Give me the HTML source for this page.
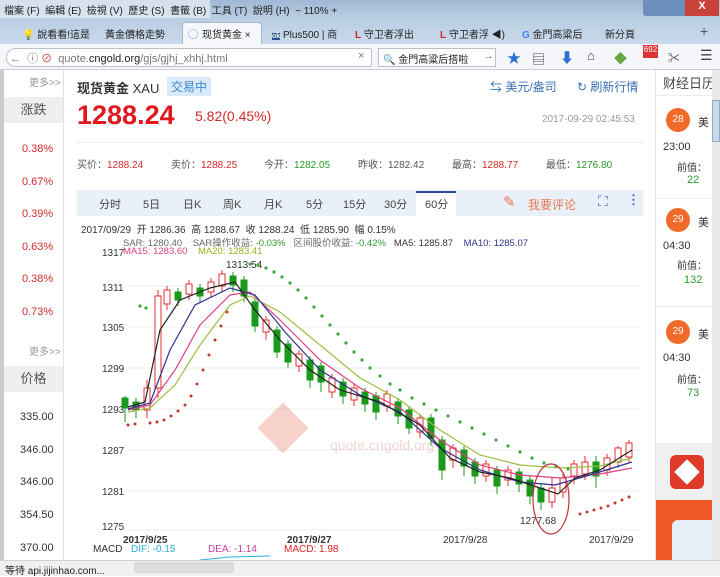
<!DOCTYPE html>
<html><head><meta charset="utf-8"><style>
*{margin:0;padding:0;box-sizing:border-box}
body{width:720px;height:576px;overflow:hidden;font-family:"Liberation Sans","Noto Sans CJK SC",sans-serif;background:#fff;position:relative;font-size:12px;color:#333}
.abs{position:absolute;white-space:nowrap}
.red{color:#d42a2a}.grn{color:#2a9a2a}
</style></head><body>
<div class="abs" style="left:0;top:0;width:720px;height:44px;background:linear-gradient(#9fb8d4,#b9cde2 40%,#c9d9ea)"></div>
<div class="abs" style="left:0;top:0;width:210px;height:18px;background:#dfe8f2;opacity:.85"></div>
<div class="abs" style="left:4px;top:2px;font-size:10px;color:#222">檔案 (F)&nbsp; 編輯 (E)&nbsp; 檢視 (V)&nbsp; 歷史 (S)&nbsp; 書籤 (B)&nbsp; 工具 (T)&nbsp; 說明 (H)&nbsp; <b style="color:#555">−</b> 110% +</div>
<div class="abs" style="left:643px;top:0;width:22px;height:16px;background:#6c8fbf;border-radius:0 0 0 3px"></div>
<div class="abs" style="left:665px;top:0;width:20px;height:16px;background:#6c8fbf"></div>
<div class="abs" style="left:685px;top:0;width:34px;height:16px;background:#c8413a;color:#fff;text-align:center;font-size:11px;font-weight:bold">X</div>
<div class="abs" style="left:0;top:20px;width:720px;height:24px;font-size:10px;color:#222">
<span class="abs" style="left:22px;top:6px">💡 說看看!這是</span>
<span class="abs" style="left:105px;top:6px">黃金價格走勢</span>
<div class="abs" style="left:182px;top:2px;width:80px;height:22px;background:#f5f7fa;border-radius:4px 4px 0 0;border:1px solid #a9b8c8;border-bottom:none"></div>
<span class="abs" style="left:188px;top:6px;color:#2a7de1">◯</span><span class="abs" style="left:202px;top:6px">现货黄金 ×</span>
<span class="abs" style="left:272px;top:6px"><b style="background:#2a4f8e;color:#fff;font-size:7px">ok</b> Plus500 | 商</span>
<span class="abs" style="left:355px;top:6px"><b style="color:#d22">L</b> 守卫者浮出</span>
<span class="abs" style="left:440px;top:6px"><b style="color:#d22">L</b> 守卫者浮 ◀)</span>
<span class="abs" style="left:522px;top:6px"><b style="color:#4285f4">G</b> 金門高粱后</span>
<span class="abs" style="left:605px;top:6px">新分頁</span>
<span class="abs" style="left:700px;top:3px;font-size:14px;color:#555">+</span>
</div>
<div class="abs" style="left:0;top:44px;width:720px;height:26px;background:#f4f6f9;border-bottom:1px solid #c9ced6"></div>
<div class="abs" style="left:6px;top:48px;width:366px;height:19px;background:#fff;border:1px solid #b9c0cb;border-radius:10px 2px 2px 10px"></div>
<div class="abs" style="left:10px;top:50px;font-size:11px;color:#777">←&nbsp; ⓘ <span style="color:#c33">⊘</span>&nbsp; quote.<span style="color:#222">cngold.org</span>/gjs/gjhj_xhhj.html</div>
<div class="abs" style="left:358px;top:50px;font-size:11px;color:#777">×</div>
<div class="abs" style="left:378px;top:48px;width:118px;height:19px;background:#fff;border:1px solid #b9c0cb"></div>
<div class="abs" style="left:383px;top:51px;font-size:10px;color:#222">🔍 金門高粱后搭啦</div>
<div class="abs" style="left:483px;top:50px;font-size:11px;color:#777">→</div>
<div class="abs" style="left:507px;top:48px;font-size:14px;color:#2a72d0">★</div>
<div class="abs" style="left:532px;top:49px;font-size:13px;color:#444">▤</div>
<div class="abs" style="left:560px;top:48px;font-size:14px;color:#2a72d0">⬇</div>
<div class="abs" style="left:587px;top:48px;font-size:13px;color:#444">⌂</div>
<div class="abs" style="left:614px;top:48px;font-size:13px;color:#6a4">◆</div>
<div class="abs" style="left:643px;top:45px;width:15px;height:13px;background:#d33;color:#fff;font-size:8px;text-align:center">692</div>
<div class="abs" style="left:668px;top:49px;font-size:12px;color:#444">✂</div>
<div class="abs" style="left:700px;top:47px;font-size:14px;color:#444">☰</div>

<div class="abs" style="left:0;top:70px;width:4px;height:490px;background:#c8ccd2"></div>
<div class="abs" style="left:63px;top:70px;width:1px;height:490px;background:#e2e2e2"></div>
<div class="abs" style="left:29px;top:74px;font-size:10px;color:#999">更多>></div>
<div class="abs" style="left:4px;top:97px;width:59px;height:26px;background:#efefef;text-align:center;line-height:26px;font-size:13px;color:#555">涨跌</div>
<div class="abs red" style="left:22px;top:133px;font-size:11px;line-height:32.5px">0.38%<br>0.67%<br>0.39%<br>0.63%<br>0.38%<br>0.73%</div>
<div class="abs" style="left:29px;top:343px;font-size:10px;color:#999">更多>></div>
<div class="abs" style="left:4px;top:366px;width:59px;height:26px;background:#efefef;text-align:center;line-height:26px;font-size:13px;color:#555">价格</div>
<div class="abs" style="left:20px;top:401px;font-size:11px;line-height:32.7px;color:#333">335.00<br>346.00<br>346.00<br>354.50<br>370.00</div>

<div class="abs" style="left:77px;top:78px;font-size:13px;color:#333"><b>现货黄金</b> XAU</div>
<div class="abs" style="left:167px;top:77px;padding:1px 4px;background:#dbeaf8;color:#3a8ad0;font-size:12px">交易中</div>
<div class="abs" style="left:490px;top:78px;font-size:12px;color:#3a70b8">⇆ 美元/盎司</div>
<div class="abs" style="left:577px;top:78px;font-size:12px;color:#3a70b8">↻ 刷新行情</div>
<div class="abs" style="left:77px;top:100px;font-size:27px;font-weight:bold;color:#e0191e">1288.24</div>
<div class="abs" style="left:195px;top:108px;font-size:14px;color:#d42a2a">5.82(0.45%)</div>
<div class="abs" style="left:542px;top:114px;font-size:10px;color:#999">2017-09-29 02:45:53</div>
<div class="abs" style="left:77px;top:142px;width:566px;height:1px;background:#ececec"></div>
<div class="abs" style="left:77px;top:156px;font-size:10px;color:#555">买价：<span class="red">1288.24</span></div>
<div class="abs" style="left:171px;top:156px;font-size:10px;color:#555">卖价：<span class="red">1288.25</span></div>
<div class="abs" style="left:264px;top:156px;font-size:10px;color:#555">今开：<span class="grn">1282.05</span></div>
<div class="abs" style="left:358px;top:156px;font-size:10px;color:#555">昨收：1282.42</div>
<div class="abs" style="left:452px;top:156px;font-size:10px;color:#555">最高：<span class="red">1288.77</span></div>
<div class="abs" style="left:546px;top:156px;font-size:10px;color:#555">最低：<span class="grn">1276.80</span></div>
<div class="abs" style="left:77px;top:190px;width:566px;height:26px;background:#e9f0f9"></div>
<div class="abs" style="left:416px;top:191px;width:40px;height:25px;background:#fff;border-top:2px solid #2a4f8e"></div>
<div class="abs" style="left:77px;top:196px;font-size:11px;color:#444">
<span class="abs" style="left:22px">分时</span><span class="abs" style="left:66px">5日</span><span class="abs" style="left:106px">日K</span><span class="abs" style="left:146px">周K</span><span class="abs" style="left:187px">月K</span><span class="abs" style="left:229px">5分</span><span class="abs" style="left:266px">15分</span><span class="abs" style="left:307px">30分</span><span class="abs" style="left:348px">60分</span></div>
<div class="abs" style="left:503px;top:193px;font-size:15px;color:#e87a50">✎</div>
<div class="abs" style="left:528px;top:196px;font-size:12px;color:#e87a50">我要评论</div>
<div class="abs" style="left:598px;top:193px;font-size:14px;color:#3a70c8">⛶</div>
<div class="abs" style="left:627px;top:192px;font-size:13px;color:#3a70c8;font-weight:bold">⋮</div>

<svg class="abs" style="left:77px;top:244px" width="566" height="316" viewBox="77 244 566 316">
<g stroke="#ececec" stroke-width="1">
<line x1="128" y1="286" x2="640" y2="286"/><line x1="128" y1="327" x2="640" y2="327"/><line x1="128" y1="368" x2="640" y2="368"/><line x1="128" y1="409" x2="640" y2="409"/><line x1="128" y1="450" x2="640" y2="450"/><line x1="128" y1="491" x2="640" y2="491"/><line x1="128" y1="530" x2="640" y2="530"/>
</g>
<g font-size="10" fill="#333" font-family="Liberation Sans">
<text x="102" y="256">1317</text><text x="102" y="291">1311</text><text x="102" y="331">1305</text><text x="102" y="372">1299</text><text x="102" y="413">1293</text><text x="102" y="454">1287</text><text x="102" y="495">1281</text><text x="102" y="530">1275</text>
<text x="123" y="543" font-weight="bold">2017/9/25</text><text x="287" y="543" font-weight="bold">2017/9/27</text><text x="443" y="543">2017/9/28</text><text x="589" y="543">2017/9/29</text>
<text x="226" y="268">1313.54</text><text x="520" y="524">1277.68</text>
<text x="93" y="552">MACD</text><text x="131" y="552" fill="#2ab0d8">DIF: -0.15</text><text x="208" y="552" fill="#c040a0">DEA: -1.14</text><text x="284" y="552" fill="#d22">MACD: 1.98</text>
</g>
<g opacity=".25"><rect x="265" y="410" width="36" height="36" fill="#e05030" transform="rotate(45 283 428)"/><text x="330" y="450" font-size="14" fill="#c55">quote.cngold.org</text></g>
<g stroke-width="1">
<g fill="#1a9a1a" stroke="#1a9a1a">
<line x1="125" y1="396" x2="125" y2="422"/><rect x="122" y="398" width="6" height="10"/>
<line x1="136" y1="398" x2="136" y2="418"/><rect x="133" y="402" width="6" height="8"/>
<line x1="178" y1="288" x2="178" y2="306"/><rect x="175" y="292" width="6" height="8"/>
<line x1="200" y1="284" x2="200" y2="302"/><rect x="197" y="288" width="6" height="8"/>
<line x1="233" y1="272" x2="233" y2="292"/><rect x="230" y="276" width="6" height="9"/>
<line x1="244" y1="276" x2="244" y2="302"/><rect x="241" y="280" width="6" height="16"/>
<line x1="255" y1="298" x2="255" y2="332"/><rect x="252" y="302" width="6" height="24"/>
<line x1="277" y1="326" x2="277" y2="358"/><rect x="274" y="330" width="6" height="22"/>
<line x1="288" y1="340" x2="288" y2="368"/><rect x="285" y="344" width="6" height="18"/>
<line x1="310" y1="356" x2="310" y2="388"/><rect x="307" y="360" width="6" height="20"/>
<line x1="321" y1="362" x2="321" y2="392"/><rect x="318" y="366" width="6" height="16"/>
<line x1="343" y1="378" x2="343" y2="404"/><rect x="340" y="382" width="6" height="14"/>
<line x1="365" y1="388" x2="365" y2="412"/><rect x="362" y="392" width="6" height="12"/>
<line x1="376" y1="392" x2="376" y2="420"/><rect x="373" y="396" width="6" height="16"/>
<line x1="398" y1="398" x2="398" y2="424"/><rect x="395" y="402" width="6" height="14"/>
<line x1="409" y1="406" x2="409" y2="434"/><rect x="406" y="410" width="6" height="18"/>
<line x1="431" y1="414" x2="431" y2="446"/><rect x="428" y="418" width="6" height="20"/>
<line x1="442" y1="436" x2="442" y2="480"/><rect x="439" y="440" width="6" height="30"/>
<line x1="464" y1="446" x2="464" y2="476"/><rect x="461" y="450" width="6" height="16"/>
<line x1="475" y1="458" x2="475" y2="484"/><rect x="472" y="462" width="6" height="14"/>
<line x1="497" y1="466" x2="497" y2="494"/><rect x="494" y="470" width="6" height="16"/>
<line x1="519" y1="468" x2="519" y2="492"/><rect x="516" y="472" width="6" height="12"/>
<line x1="530" y1="476" x2="530" y2="504"/><rect x="527" y="480" width="6" height="16"/>
<line x1="541" y1="484" x2="541" y2="510"/><rect x="538" y="488" width="6" height="14"/>
<line x1="596" y1="456" x2="596" y2="488"/><rect x="593" y="462" width="6" height="14"/>
</g>
<g fill="#fff" stroke="#e03030">
<line x1="147" y1="380" x2="147" y2="418"/><rect x="144" y="388" width="6" height="22"/>
<line x1="158" y1="290" x2="158" y2="398"/><rect x="155" y="296" width="6" height="92"/>
<line x1="167" y1="286" x2="167" y2="310"/><rect x="164" y="290" width="6" height="14"/>
<line x1="189" y1="280" x2="189" y2="300"/><rect x="186" y="284" width="6" height="10"/>
<line x1="211" y1="278" x2="211" y2="298"/><rect x="208" y="282" width="6" height="10"/>
<line x1="222" y1="270" x2="222" y2="292"/><rect x="219" y="274" width="6" height="12"/>
<line x1="266" y1="316" x2="266" y2="340"/><rect x="263" y="320" width="6" height="12"/>
<line x1="299" y1="350" x2="299" y2="372"/><rect x="296" y="354" width="6" height="12"/>
<line x1="332" y1="374" x2="332" y2="398"/><rect x="329" y="378" width="6" height="14"/>
<line x1="354" y1="384" x2="354" y2="406"/><rect x="351" y="388" width="6" height="12"/>
<line x1="387" y1="390" x2="387" y2="412"/><rect x="384" y="394" width="6" height="12"/>
<line x1="420" y1="414" x2="420" y2="438"/><rect x="417" y="418" width="6" height="14"/>
<line x1="453" y1="444" x2="453" y2="468"/><rect x="450" y="448" width="6" height="12"/>
<line x1="486" y1="460" x2="486" y2="482"/><rect x="483" y="464" width="6" height="12"/>
<line x1="508" y1="466" x2="508" y2="486"/><rect x="505" y="470" width="6" height="10"/>
<line x1="552" y1="478" x2="552" y2="508"/><rect x="549" y="488" width="6" height="14"/>
<line x1="563" y1="472" x2="563" y2="498"/><rect x="560" y="478" width="6" height="14"/>
<line x1="574" y1="460" x2="574" y2="484"/><rect x="571" y="464" width="6" height="12"/>
<line x1="585" y1="456" x2="585" y2="480"/><rect x="582" y="462" width="6" height="12"/>
<line x1="607" y1="454" x2="607" y2="476"/><rect x="604" y="458" width="6" height="12"/>
<line x1="618" y1="446" x2="618" y2="468"/><rect x="615" y="448" width="6" height="14"/>
<line x1="629" y1="440" x2="629" y2="462"/><rect x="626" y="443" width="6" height="14"/>
</g></g>
<g fill="none" stroke-width="1.2">
<polyline stroke="#9bc040" points="128,412 150,408 175,385 200,345 230,305 250,296 280,312 320,345 360,378 400,400 440,430 480,455 520,465 560,468 600,466 632,458"/>
<polyline stroke="#e04080" points="128,410 150,405 175,370 200,325 230,295 250,292 280,320 320,360 360,388 400,408 440,440 480,465 520,475 560,478 600,474 632,468"/>
<polyline stroke="#303090" points="128,409 150,403 170,350 195,305 230,288 255,295 285,332 320,370 360,395 400,412 440,448 480,470 520,482 555,485 590,475 632,462"/>
<polyline stroke="#222" points="128,407 145,402 160,330 180,300 210,288 235,282 255,310 280,340 310,370 340,390 380,402 420,425 450,458 480,472 510,478 540,488 558,494 575,478 600,470 632,450"/>
</g>
<g fill="#c0392b"><circle cx="128" cy="425" r="1.5"/><circle cx="135" cy="424" r="1.5"/><circle cx="150" cy="423" r="1.5"/><circle cx="157" cy="422" r="1.5"/><circle cx="164" cy="420" r="1.5"/><circle cx="171" cy="416" r="1.5"/><circle cx="178" cy="411" r="1.5"/><circle cx="185" cy="405" r="1.5"/><circle cx="191" cy="396" r="1.5"/><circle cx="197" cy="384" r="1.5"/><circle cx="203" cy="370" r="1.5"/><circle cx="209" cy="355" r="1.5"/><circle cx="215" cy="340" r="1.5"/><circle cx="221" cy="326" r="1.5"/><circle cx="227" cy="312" r="1.5"/>
<circle cx="580" cy="514" r="1.5"/><circle cx="587" cy="512" r="1.5"/><circle cx="594" cy="510" r="1.5"/><circle cx="601" cy="508" r="1.5"/><circle cx="608" cy="506" r="1.5"/><circle cx="615" cy="503" r="1.5"/><circle cx="622" cy="500" r="1.5"/><circle cx="629" cy="497" r="1.5"/></g>
<g fill="#3aa83a"><circle cx="250" cy="264" r="1.6"/><circle cx="258" cy="265" r="1.6"/><circle cx="266" cy="268" r="1.6"/><circle cx="274" cy="272" r="1.6"/><circle cx="282" cy="277" r="1.6"/><circle cx="290" cy="283" r="1.6"/><circle cx="298" cy="290" r="1.6"/><circle cx="306" cy="298" r="1.6"/><circle cx="314" cy="307" r="1.6"/><circle cx="322" cy="316" r="1.6"/><circle cx="330" cy="325" r="1.6"/><circle cx="338" cy="334" r="1.6"/><circle cx="346" cy="343" r="1.6"/><circle cx="354" cy="352" r="1.6"/><circle cx="362" cy="360" r="1.6"/><circle cx="370" cy="368" r="1.6"/><circle cx="380" cy="376" r="1.6"/><circle cx="390" cy="384" r="1.6"/><circle cx="400" cy="390" r="1.6"/><circle cx="412" cy="398" r="1.6"/><circle cx="424" cy="404" r="1.6"/><circle cx="436" cy="410" r="1.6"/><circle cx="448" cy="416" r="1.6"/><circle cx="460" cy="422" r="1.6"/><circle cx="472" cy="428" r="1.6"/><circle cx="484" cy="434" r="1.6"/><circle cx="496" cy="440" r="1.6"/><circle cx="508" cy="446" r="1.6"/><circle cx="520" cy="452" r="1.6"/><circle cx="532" cy="458" r="1.6"/><circle cx="544" cy="463" r="1.6"/><circle cx="556" cy="466" r="1.6"/><circle cx="568" cy="469" r="1.6"/><circle cx="140" cy="306" r="1.6"/><circle cx="146" cy="308" r="1.6"/></g>
<ellipse cx="551" cy="499" rx="18" ry="35" fill="none" stroke="#c0303a" stroke-width="1.2"/>
<polyline points="200,560 230,557 270,556" fill="none" stroke="#2ab0d8"/>
</svg>
<div class="abs" style="left:81px;top:221px;font-size:10px;color:#333">2017/09/29&nbsp; 开 1286.36&nbsp; 高 1288.67&nbsp; 收 1288.24&nbsp; 低 1285.90&nbsp; 幅 0.15%</div>
<div class="abs" style="left:123px;top:235px;font-size:9.5px;color:#666">SAR: 1280.40&nbsp;&nbsp;&nbsp; SAR操作收益: <span class="grn">-0.03%</span>&nbsp;&nbsp; 区间股价收益: <span class="grn">-0.42%</span>&nbsp;&nbsp; <span style="color:#333">MA5: 1285.87</span>&nbsp;&nbsp;&nbsp; <span style="color:#33338a">MA10: 1285.07</span></div>
<div class="abs" style="left:123px;top:246px;font-size:9.5px"><span style="color:#e0407a">MA15: 1283.60</span>&nbsp;&nbsp;&nbsp; <span style="color:#99b020">MA20: 1283.41</span></div>

<div class="abs" style="left:655px;top:70px;width:1px;height:490px;background:#e6e6e6"></div>
<div class="abs" style="left:663px;top:73px;font-size:13px;color:#444">财经日历</div>
<div class="abs" style="left:656px;top:95px;width:56px;height:1px;background:#ececec"></div>
<div class="abs" style="left:666px;top:108px;width:24px;height:24px;border-radius:50%;background:#f26a2a;color:#fff;font-size:10px;text-align:center;line-height:24px">28</div>
<div class="abs" style="left:698px;top:114px;font-size:11px">美</div>
<div class="abs" style="left:663px;top:141px;font-size:11px">23:00</div>
<div class="abs" style="left:677px;top:159px;font-size:10px">前值：</div>
<div class="abs grn" style="left:687px;top:174px;font-size:11px">22</div>
<div class="abs" style="left:656px;top:198px;width:56px;height:1px;background:#ececec"></div>
<div class="abs" style="left:666px;top:208px;width:24px;height:24px;border-radius:50%;background:#f26a2a;color:#fff;font-size:10px;text-align:center;line-height:24px">29</div>
<div class="abs" style="left:698px;top:214px;font-size:11px">美</div>
<div class="abs" style="left:663px;top:240px;font-size:11px">04:30</div>
<div class="abs" style="left:677px;top:257px;font-size:10px">前值：</div>
<div class="abs grn" style="left:684px;top:274px;font-size:11px">132</div>
<div class="abs" style="left:656px;top:306px;width:56px;height:1px;background:#ececec"></div>
<div class="abs" style="left:666px;top:320px;width:24px;height:24px;border-radius:50%;background:#f26a2a;color:#fff;font-size:10px;text-align:center;line-height:24px">29</div>
<div class="abs" style="left:698px;top:326px;font-size:11px">美</div>
<div class="abs" style="left:663px;top:352px;font-size:11px">04:30</div>
<div class="abs" style="left:677px;top:371px;font-size:10px">前值：</div>
<div class="abs grn" style="left:687px;top:387px;font-size:11px">73</div>
<div class="abs" style="left:656px;top:443px;width:56px;height:117px;background:#f0f0f0"></div>
<div class="abs" style="left:670px;top:455px;width:34px;height:34px;border-radius:6px;background:#e03a2a"></div>
<div class="abs" style="left:678px;top:463px;width:18px;height:18px;background:#fff;transform:rotate(45deg)"></div>
<div class="abs" style="left:656px;top:500px;width:56px;height:60px;background:#f0582a"></div>
<div class="abs" style="left:672px;top:520px;width:40px;height:40px;background:#e8eef6;border-radius:6px 0 0 0"></div>
<div class="abs" style="left:712px;top:70px;width:8px;height:490px;background:#eaeaea"></div>
<div class="abs" style="left:712px;top:100px;width:8px;height:42px;background:#c9daf0;border:1px solid #9ab"></div>
<div class="abs" style="left:0;top:560px;width:720px;height:16px;background:#eef0f2;border-top:1px solid #d0d0d0"></div>
<div class="abs" style="left:5px;top:562px;font-size:10px;color:#222">等待 api.jijinhao.com...</div>
<div class="abs" style="left:134px;top:562px;width:100px;height:11px;background:#dcdcdc"></div>
</body></html>
